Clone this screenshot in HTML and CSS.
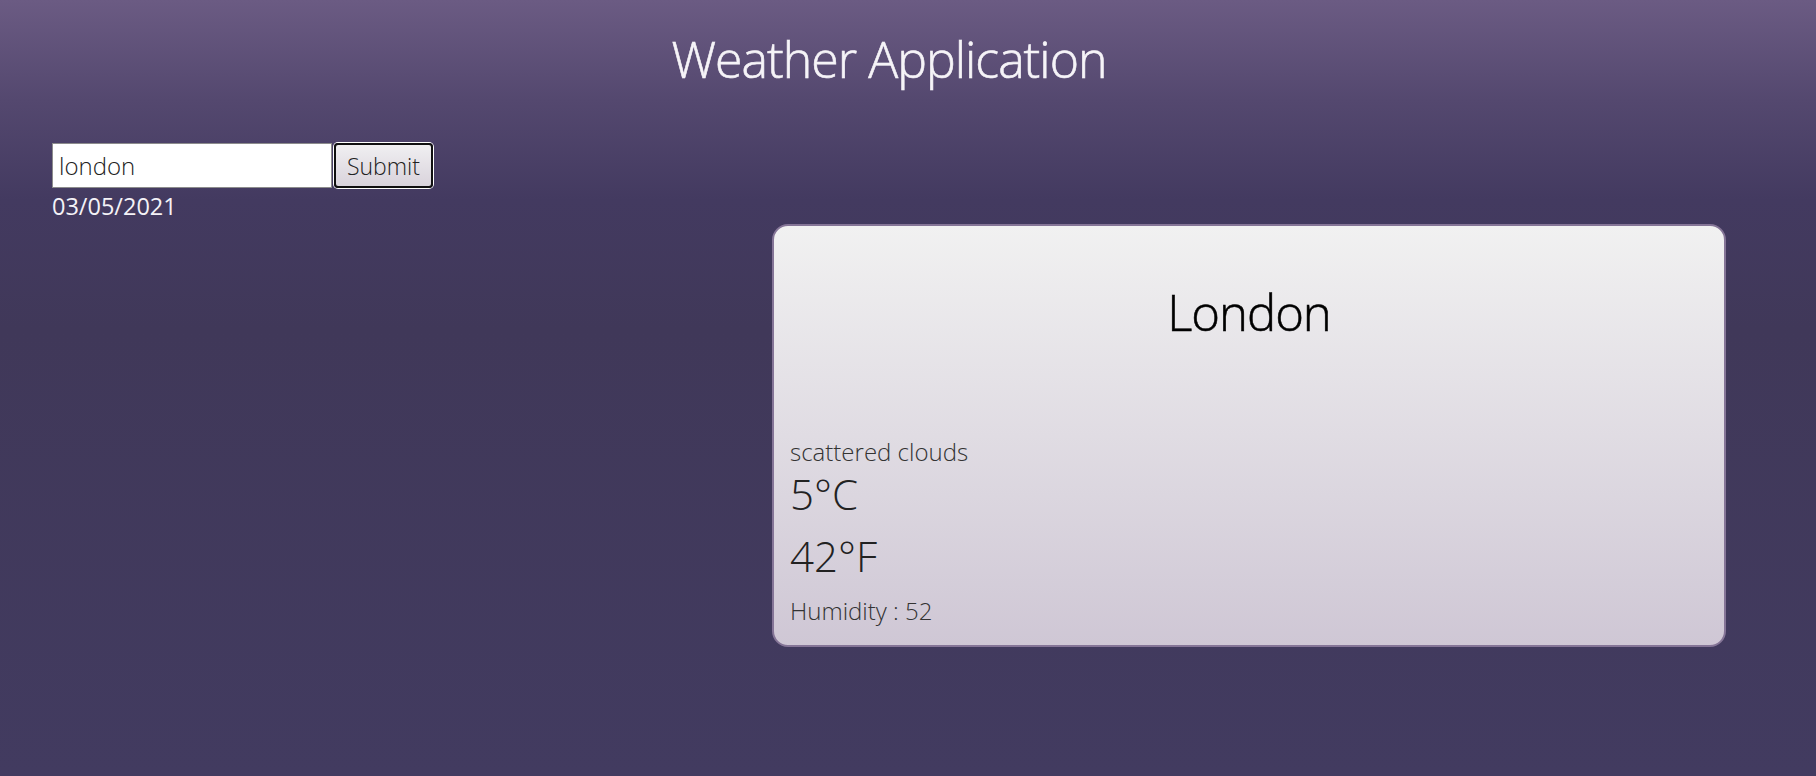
FILE: index.html
```html
<!DOCTYPE html>
<html lang="en">
<head>
<meta charset="utf-8">
<title>Weather Application</title>
<link rel="stylesheet" href="styles.css">
</head>
<body>
<div class="page">
  <h1 class="title">Weather Application</h1>
  <div class="content">
    <div class="search">
      <form class="search-form">
        <input class="search-input" type="text" value="london">
        <button class="search-btn" type="button">Submit</button>
      </form>
      <div class="date">03/05/2021</div>
    </div>
    <div class="card">
      <h2 class="city">London</h2>
      <div class="desc">scattered clouds</div>
      <div class="temp temp-c">5°C</div>
      <div class="temp temp-f">42°F</div>
      <div class="humidity">Humidity : 52</div>
    </div>
  </div>
</div>
</body>
</html>
```

FILE: styles.css
```css
html, body {
  margin: 0;
  padding: 0;
}
body {
  min-height: 100vh;
  font-family: "Open Sans", "Noto Sans", sans-serif;
  font-weight: 300;
  background: linear-gradient(to bottom, #6b5b83 0px, #54486f 100px, #433a60 200px, #403859 330px, #423b60 776px);
  color: #fff;
}
.page {
  margin: 0 90px 0 52px;
  padding-top: 25px;
}
.title {
  margin: 0;
  text-align: center;
  font-size: 50px;
  font-weight: 300;
  letter-spacing: -1px;
  -webkit-text-stroke: 0.6px #f6f4f8;
  color: #f6f4f8;
  line-height: 68px;
}
.content {
  display: flex;
  justify-content: space-between;
  align-items: flex-start;
  margin-top: 50px;
}
.search-form {
  display: flex;
  align-items: center;
  gap: 1px;
}
.search-input {
  box-sizing: border-box;
  width: 280px;
  height: 45px;
  margin: 0;
  padding: 0 6px;
  border: 1px solid #8c8c8c;
  background: #fff;
  font-family: "Open Sans", sans-serif;
  font-weight: 300;
  font-size: 24px;
  color: #222;
}
.search-btn {
  box-sizing: border-box;
  height: 45px;
  width: 99px;
  margin: 0 0 0 1px;
  padding: 0 6px;
  border: 2px solid #101010;
  border-radius: 4px;
  box-shadow: 0 0 0 1px #fff;
  background: linear-gradient(to bottom, #f0eff1, #d9d3dc);
  font-family: "Open Sans", sans-serif;
  font-weight: 300;
  font-size: 23px;
  color: #222;
}
.date {
  margin-top: 2px;
  font-size: 23.5px;
  font-weight: 500;
  color: #f4f2f7;
  line-height: 32px;
}
.card {
  box-sizing: border-box;
  width: 954px;
  height: 423px;
  margin-top: 81px;
  padding: 0 16px;
  border: 2px solid #857597;
  border-radius: 16px;
  background: linear-gradient(to bottom, #f1f1f1, #cfc7d5);
  color: #2a2a2a;
  display: flex;
  flex-direction: column;
}
.city {
  margin: 52px 0 90px;
  text-align: center;
  font-size: 49px;
  font-weight: 300;
  letter-spacing: -1px;
  -webkit-text-stroke: 0.5px #000;
  color: #000;
  line-height: 68px;
}
.desc {
  font-size: 24px;
  line-height: 32px;
  color: #333;
}
.temp {
  font-size: 42px;
  line-height: 52px;
  color: #222;
}
.temp-f {
  margin-top: 10px;
}
.humidity {
  margin-top: 13px;
  font-size: 24px;
  line-height: 32px;
  color: #333;
}
```
